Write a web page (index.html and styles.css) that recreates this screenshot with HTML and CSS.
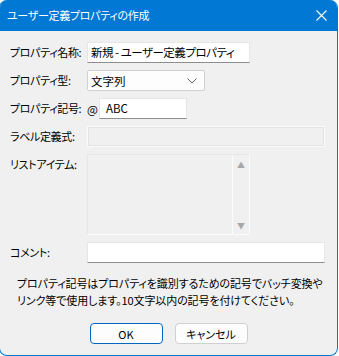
FILE: index.html
```html
<!DOCTYPE html>
<html lang="ja">
<head>
  <meta charset="UTF-8">
  <title>ユーザー定義プロパティの作成</title>
  <link rel="stylesheet" href="styles.css">
</head>
<body>
  <div class="window">
    <div class="titlebar">
      <span class="title">ユーザー定義プロパティの作成</span>
      <svg class="close" width="11" height="11" viewBox="0 0 11 11">
        <path d="M0.5 0.5 L10.5 10.5 M10.5 0.5 L0.5 10.5" stroke="#fff" stroke-width="1.1" fill="none"/>
      </svg>
    </div>

    <div class="content">
      <div class="form">
        <label class="lbl">プロパティ名称:</label>
        <div class="field"><div class="input w-name">新規 - ユーザー定義プロパティ</div></div>

        <label class="lbl">プロパティ型:</label>
        <div class="field">
          <div class="select">
            <span>文字列</span>
            <svg width="10" height="6" viewBox="0 0 10 6">
              <path d="M0.5 0.5 L5 5 L9.5 0.5" stroke="#606060" stroke-width="1" fill="none"/>
            </svg>
          </div>
        </div>

        <label class="lbl">プロパティ記号:</label>
        <div class="field">
          <span class="at">@</span>
          <div class="input w-sym">ABC</div>
        </div>

        <label class="lbl">ラベル定義式:</label>
        <div class="field"><div class="disabled w-full"></div></div>

        <label class="lbl">リストアイテム:</label>
        <div class="field">
          <div class="listbox">
            <div class="list-area"></div>
            <div class="scrollbar">
              <span class="arrow">&#9650;</span>
              <span class="arrow">&#9660;</span>
            </div>
          </div>
        </div>

        <label class="lbl">コメント:</label>
        <div class="field"><div class="input w-full"></div></div>
      </div>

      <p class="note">プロパティ記号はプロパティを識別するための記号でバッチ変換や<br>リンク等で使用します。10文字以内の記号を付けてください。</p>

      <div class="buttons">
        <button class="btn btn-default">OK</button>
        <button class="btn">キャンセル</button>
      </div>
    </div>
  </div>
</body>
</html>
```

FILE: styles.css
```css
html, body {
  margin: 0;
  padding: 0;
  background: #ffffff;
}

body {
  font-family: "Noto Sans CJK JP", "Noto Sans", sans-serif;
  font-size: 11px;
  color: #000;
  font-feature-settings: "palt";
  overflow: hidden;
}

.window {
  margin-left: -1px;
  width: 337px;
  height: 355px;
  border-right: 1px solid #0078d4;
  border-bottom: 1px solid #0078d4;
  border-left: 1px solid #0078d4;
  border-radius: 8px;
  background: #f0f0f0;
  overflow: hidden;
}

.titlebar {
  height: 31px;
  background: #0078d4;
  color: #fff;
  display: flex;
  align-items: center;
  padding: 0 10px 0 7px;
}

.title {
  flex: 1;
  font-size: 11px;
  line-height: 31px;
  letter-spacing: -0.3px;
}

.content {
  padding: 11px 0 0 10px;
}

/* フォーム部分 */
.form {
  display: grid;
  grid-template-columns: 77px 1fr;
  row-gap: 7px;
}

.lbl {
  line-height: 21px;
  height: 21px;
  white-space: nowrap;
  letter-spacing: -0.35px;
}

.field {
  display: flex;
  align-items: center;
  height: 21px;
}

.input {
  box-sizing: border-box;
  height: 21px;
  background: #fff;
  border: 1px solid #e6e6e6;
  border-bottom-color: #8d8d8d;
  padding: 0 3px;
  line-height: 19px;
  font-size: 11.5px;
  white-space: nowrap;
  overflow: hidden;
}

.w-name { width: 163px; letter-spacing: -0.5px; }
.w-sym { width: 88px; padding-left: 6px; }
.w-full { width: 238px; }

.at {
  width: 12px;
  font-size: 11.5px;
}

.select {
  box-sizing: border-box;
  width: 118px;
  height: 21px;
  background: #fdfdfd;
  border: 1px solid #d0d0d0;
  border-radius: 2px;
  display: flex;
  align-items: center;
  justify-content: space-between;
  padding: 0 7px 0 3px;
  font-size: 11.5px;
}

.disabled {
  box-sizing: border-box;
  height: 21px;
  border: 1px solid #fbfbfb;
  outline: 1px solid #e3e3e3;
  outline-offset: -2px;
  background: #f0f0f0;
}

.field:has(.listbox) {
  height: 81px;
  align-items: stretch;
}

.listbox {
  box-sizing: border-box;
  width: 163px;
  height: 81px;
  display: flex;
  border: 1px solid #fbfbfb;
  border-top-color: #e6e6e6;
  border-left-color: #e6e6e6;
}

.list-area {
  flex: 1;
}

.scrollbar {
  width: 16px;
  border-left: 1px solid #fcfcfc;
  display: flex;
  flex-direction: column;
  justify-content: space-between;
  align-items: center;
  padding: 5px 0 4px;
}

.arrow {
  font-size: 8px;
  line-height: 9px;
  color: #a8a8a8;
}

.note {
  margin: 12px 0 0 7px;
  line-height: 17px;
  white-space: nowrap;
  letter-spacing: -0.1px;
}

.buttons {
  display: flex;
  justify-content: center;
  gap: 12px;
  margin: 14px 0 0 -10px;
}

.btn {
  box-sizing: border-box;
  width: 73px;
  height: 21px;
  background: #fdfdfd;
  border: 1px solid #d0d0d0;
  border-radius: 4px;
  font-family: inherit;
  font-size: 11px;
  font-feature-settings: "palt";
  padding: 0;
  color: #000;
}

.btn-default {
  border: 1px solid #0067c0;
  box-shadow: inset 0 0 0 1px #ffffff;
}
```
